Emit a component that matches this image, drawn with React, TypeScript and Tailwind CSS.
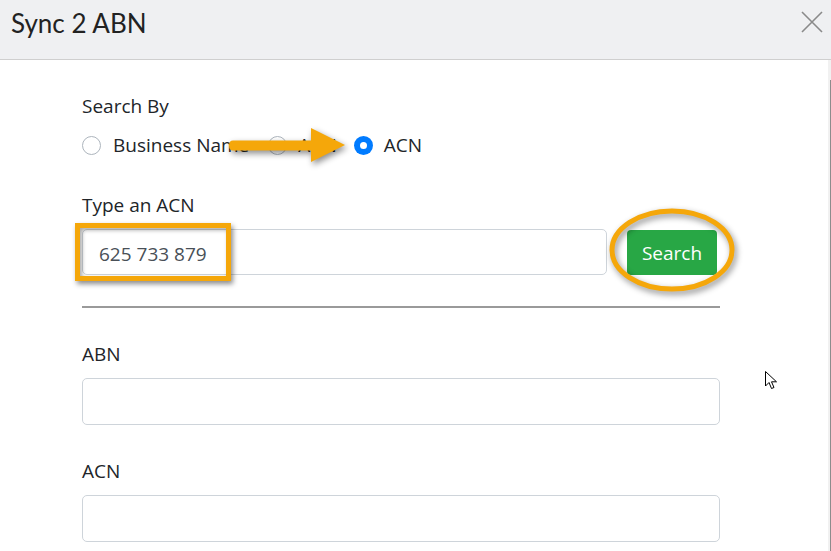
import { useState } from "react";

function Radio({ checked }: { checked?: boolean }) {
  return checked ? (
    <span className="flex items-center justify-center w-[19px] h-[19px] rounded-full bg-[#007bff]">
      <span className="w-[7px] h-[7px] rounded-full bg-white" />
    </span>
  ) : (
    <span className="w-[19px] h-[19px] rounded-full border border-[#adb5bd] bg-white" />
  );
}

export default function App() {
  const [acn] = useState("625 733 879");

  return (
    <div className="relative w-[831px] h-[551px] overflow-hidden bg-white font-['Open_Sans',sans-serif] text-[#212529]">
      <header className="flex items-center justify-between h-[60px] bg-[#eff0f2] border-b border-[#cfcfcf] pl-[11px] pr-[8px]">
        <h1 className="font-['Lato',sans-serif] text-[26px] text-[#222] -mt-[12px]">Sync 2 ABN</h1>
        <svg width="22" height="22" viewBox="0 0 22 22" className="-mt-[16px]">
          <path d="M1 1L21 21M21 1L1 21" stroke="#8a8a8a" strokeWidth="1.6" />
        </svg>
      </header>

      <div className="flex h-[491px]">
        <main className="flex-1 pl-[82px] pt-[33px]">
          <div className="w-[638px] text-[19px]">
            <p className="leading-[27px]">Search By</p>
            <div className="flex items-center h-[27px] mt-[12px]">
              <label className="flex items-center gap-[12px]">
                <Radio />
                <span>Business Name</span>
              </label>
              <label className="flex items-center gap-[11px] ml-[19px]">
                <Radio />
                <span>ABN</span>
              </label>
              <label className="flex items-center gap-[11px] ml-[17px]">
                <Radio checked />
                <span>ACN</span>
              </label>
            </div>

            <p className="leading-[27px] mt-[33px]">Type an ACN</p>
            <div className="flex items-center mt-[10px]">
              <input
                readOnly
                value={acn}
                className="w-[525px] h-[46px] rounded-[5px] border border-[#ced4da] px-[16px] pt-[3px] text-[19px] text-[#495057] outline-none"
              />
              <button className="ml-[20px] w-[90px] h-[45px] pt-[3px] rounded-[4px] bg-[#28a745] text-white text-[19px]">
                Search
              </button>
            </div>

            <hr className="mt-[31px] border-0 h-[1.5px] bg-[#9a9a9a]" />

            <label className="block leading-[27px] mt-[33px]">ABN</label>
            <input className="block w-full h-[47px] mt-[10px] rounded-[5px] border border-[#ced4da] outline-none" />

            <label className="block leading-[27px] mt-[33px]">ACN</label>
            <input className="block w-full h-[47px] mt-[10px] rounded-[5px] border border-[#ced4da] outline-none" />
          </div>
        </main>
        <div className="w-[3px] bg-[#f1f1f1] flex justify-end pt-[20px]">
          <div className="w-[1px] bg-[#8c8c8c]" />
        </div>
      </div>

      {/* annotation: arrow */}
      <svg
        className="absolute left-[227px] top-[125px] drop-shadow-[2px_3px_3px_rgba(0,0,0,0.45)]"
        width="124"
        height="42"
        viewBox="0 0 124 42"
      >
        <path d="M6 15.5 L84 15.5 L84 3 L118 20 L84 37 L84 25.5 L6 25.5 Q2 25.5 2 20.5 Q2 15.5 6 15.5 Z" fill="#f5a70a" />
      </svg>

      {/* annotation: highlight box */}
      <div className="absolute left-[75px] top-[223px] w-[156px] h-[58px] border-[5px] border-[#f5a70a] shadow-[2px_3px_5px_rgba(0,0,0,0.45),inset_2px_2px_4px_rgba(0,0,0,0.35)]" />

      {/* annotation: ellipse */}
      <svg
        className="absolute left-[606px] top-[205px] drop-shadow-[2px_3px_3px_rgba(0,0,0,0.45)]"
        width="134"
        height="92"
        viewBox="0 0 134 92"
      >
        <ellipse cx="66" cy="45" rx="60" ry="39" fill="none" stroke="#f5a70a" strokeWidth="5" />
      </svg>

      {/* cursor */}
      <svg className="absolute left-[765px] top-[371px]" width="14" height="20" viewBox="0 0 14 20">
        <path
          d="M0.5 0.5 L0.5 15 L4 11.5 L6.5 17.5 L9 16.5 L6.5 10.8 L11.5 10.8 Z"
          fill="white"
          stroke="black"
          strokeWidth="1"
          strokeLinejoin="round"
        />
      </svg>
    </div>
  );
}
